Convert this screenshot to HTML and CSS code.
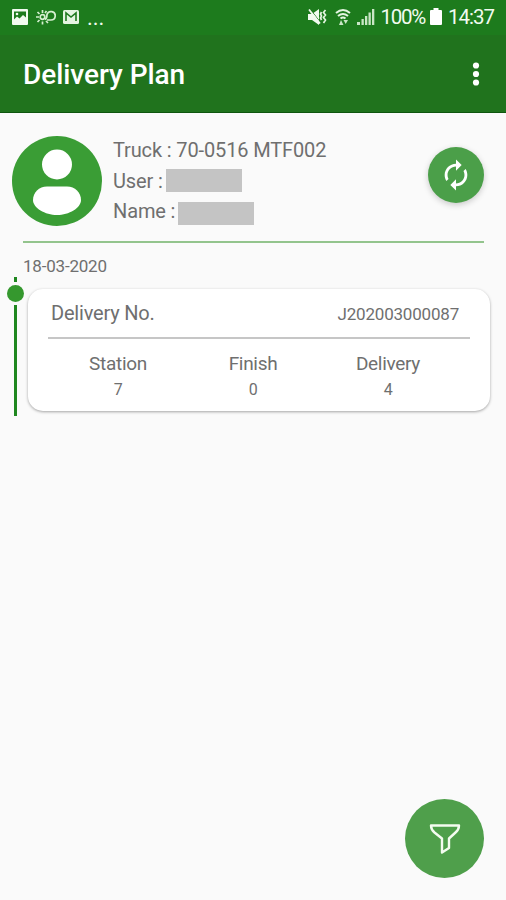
FILE: index.html
```html
<!DOCTYPE html>
<html lang="en">
<head>
  <meta charset="UTF-8">
  <meta name="viewport" content="width=device-width, initial-scale=1.0">
  <title>Delivery Plan</title>
  <link rel="stylesheet" href="styles.css">
</head>
<body>
  <div class="status-bar">
    <div class="status-left">
      <svg width="18" height="18" viewBox="0 0 18 18">
        <path fill="#f2fbf0" fill-rule="evenodd" d="M2 1h14q1 0 1 1v14q0 1-1 1H2q-1 0-1-1V2q0-1 1-1zM3 3.5v8l3-3 2.500 2L12 7l3 2.500V3.500z"/>
        <circle cx="6" cy="6" r="1.300" fill="#f2fbf0"/>
      </svg>
      <svg class="weather" width="20" height="18" viewBox="0 0 20 18" fill="none" stroke="#d5efd0" stroke-width="1.700">
        <circle cx="6.500" cy="9" r="2.300"/>
        <path d="M6.500 2v3M6.500 13.500v3M0 9h3M1.500 4l2 2M1.500 14l2-2M10 13l2 2M9 5l1.500-2"/>
        <path d="M9 11.500c2-1 2-3 2-5a4.200 4.200 0 1 1 4 5.500h-4"/>
      </svg>
      <svg class="mail" width="18" height="16" viewBox="0 0 18 16">
        <rect x="1" y="1" width="16" height="14" rx="1.500" fill="#e4f5e1"/>
        <path d="M4 12V4l5 4 5-4v8" fill="none" stroke="#1d781d" stroke-width="1.600"/>
      </svg>
      <span class="more">...</span>
    </div>
    <div class="status-right">
      <svg width="20" height="18" viewBox="0 0 20 18">
        <path d="M1 6h4l7-5v16l-7-5H1z" fill="#f2fbf0"/>
        <path d="M3.500 1.500l10 13" stroke="#1d7a1d" stroke-width="1"/>
        <path d="M2 1.500l11 14" stroke="#f2fbf0" stroke-width="1.800"/>
        <path d="M14.500 4L13.500 6l1 2-1 2 1 2M18.500 2L16.500 4.500l2 2.500-2 2.500 2 2.500-2 3" fill="none" stroke="#e4f5e1" stroke-width="1.700"/>
      </svg>
      <svg class="wifi" width="16" height="18" viewBox="0 0 16 18">
        <path d="M1 5q7-6 14 0M3 8q5-4 10 0M5.500 10.500q2.500-2 5 0" fill="none" stroke="#e4f5e1" stroke-width="2"/>
        <path d="M6 12l2.500 5H4zM8.500 12H13l-2.300 4z" fill="#c9e6c5"/>
      </svg>
      <svg class="signal" width="18" height="18" viewBox="0 0 18 18" fill="#c9e6c5">
        <path d="M0 14h3v3H0zM4.500 11h2.300v6H4.500zM8 8h2.300v9H8zM11.500 4.500h2.300V17h-2.300zM15 1h2.300v16H15z"/>
      </svg>
      <span class="percent">100%</span>
      <svg class="battery" width="12" height="18" viewBox="0 0 12 18">
        <path d="M3.500 0h5v2H11q1 0 1 1v13q0 1-1 1H1q-1 0-1-1V3q0-1 1-1h2.500z" fill="#fff"/>
      </svg>
      <span class="clock">14:37</span>
    </div>
  </div>

  <header class="app-bar">
    <h1>Delivery Plan</h1>
    <button class="menu-btn" aria-label="Menu">
      <svg width="8" height="24" viewBox="0 0 8 24" fill="#fff">
        <circle cx="4" cy="3.500" r="3.100"/>
        <circle cx="4" cy="12" r="3.100"/>
        <circle cx="4" cy="20.500" r="3.100"/>
      </svg>
    </button>
  </header>

  <main>
    <section class="profile">
      <svg class="avatar" width="90" height="90" viewBox="0 0 90 90">
        <circle cx="45" cy="45" r="45" fill="#3a9d35"/>
        <circle cx="45" cy="28.500" r="15" fill="#fff"/>
        <path d="M35 50.500h20c8 0 14 6 14 13.500C69 72 57 79 45 79S21 72 21 64c0-7.500 6-13.500 14-13.500z" fill="#fff"/>
      </svg>
      <div class="info">
        <div class="info-row">Truck : 70-0516 MTF002</div>
        <div class="info-row">User :<span class="masked user"></span></div>
        <div class="info-row">Name :<span class="masked name"></span></div>
      </div>
      <button class="sync-btn" aria-label="Refresh">
        <svg width="34" height="34" viewBox="0 0 24 24" fill="#fff">
          <path d="M12 6v3l4-4-4-4v3c-4.420 0-8 3.580-8 8 0 1.570.460 3.030 1.240 4.260L6.700 14.800A5.870 5.870 0 0 1 6 12c0-3.310 2.690-6 6-6zm6.760 1.740L17.300 9.200c.440.840.700 1.790.700 2.800 0 3.310-2.690 6-6 6v-3l-4 4 4 4v-3c4.420 0 8-3.580 8-8 0-1.570-.460-3.030-1.240-4.260z"/>
        </svg>
      </button>
    </section>

    <div class="date">18-03-2020</div>

    <section class="entry">
      <div class="timeline">
        <span class="line-top"></span>
        <span class="dot"></span>
        <span class="line"></span>
      </div>
      <div class="card">
        <div class="card-head">
          <span>Delivery No.</span>
          <span class="number">J202003000087</span>
        </div>
        <div class="stats">
          <div class="stat">Station<span class="value">7</span></div>
          <div class="stat">Finish<span class="value">0</span></div>
          <div class="stat">Delivery<span class="value">4</span></div>
        </div>
      </div>
    </section>
  </main>

  <button class="filter-btn" aria-label="Filter">
    <svg width="32" height="32" viewBox="0 0 32 32" fill="none" stroke="#f4fbf0" stroke-width="2.400" stroke-linejoin="round">
      <path d="M2 2.500h28q0 4-3.500 7L20 15.500v9.500l-7 4.500v-14L5.500 9.500Q2 6.500 2 2.500z"/>
    </svg>
  </button>
</body>
</html>
```
FILE: styles.css
```css
* {
  box-sizing: border-box;
}
body {
  margin: 0;
  min-height: 900px;
  font-family: Roboto, "Liberation Sans", sans-serif;
  background-color: #fafafa;
  color: #6f6f6f;
}
button {
  border: none;
  padding: 0;
  cursor: pointer;
}
svg {
  display: block;
}
.status-bar {
  display: flex;
  justify-content: space-between;
  height: 35px;
  padding: 0 12px 0 11px;
  background-color: #1d7b1d;
  color: #f2fbf0;
}
.status-left, .status-right {
  display: flex;
  align-items: center;
  height: 34px;
}
.weather {
  margin-left: 7px;
}
.mail {
  margin-left: 6px;
}
.more {
  margin-left: 7px;
  font-size: 22px;
}
.wifi {
  margin-left: 8px;
}
.signal {
  margin-left: 6px;
}
.percent {
  margin-left: 6px;
  font-size: 20.500px;
  letter-spacing: -1.300px;
}
.battery {
  margin-left: 5px;
}
.clock {
  margin-left: 6px;
  font-size: 20.500px;
  letter-spacing: -1px;
}
.app-bar {
  display: flex;
  justify-content: space-between;
  align-items: center;
  height: 78px;
  padding: 0 26px 0 23px;
  background-color: #20731d;
  border-bottom: 1px solid #0f560f;
}
.app-bar h1 {
  margin: 2px 0 0;
  font-size: 28px;
  font-weight: 500;
  letter-spacing: -0.050px;
  color: #fff;
}
.menu-btn {
  background: none;
}
.profile {
  display: flex;
  position: relative;
  height: 130px;
  padding: 23px 22px 0 12px;
}
.profile::after {
  content: "";
  position: absolute;
  left: 23px;
  right: 22px;
  bottom: 0;
  height: 2px;
  background-color: #93c48d;
}
.info {
  flex: 1;
  margin-top: -1px;
  padding-left: 11px;
}
.info-row {
  display: flex;
  align-items: center;
  height: 30.500px;
  font-size: 20px;
  letter-spacing: -0.130px;
}
.masked {
  width: 76px;
  height: 23px;
  margin-left: 3px;
  background-color: #c4c4c4;
}
.masked.name {
  margin-top: 4px;
}
.sync-btn {
  display: flex;
  align-items: center;
  justify-content: center;
  width: 56px;
  height: 56px;
  margin-top: 11px;
  border-radius: 50%;
  background-color: #4b9f49;
  box-shadow: 0 2px 6px rgba(0, 0, 0, 0.2);
}
.date {
  height: 34px;
  padding: 13px 23px 0;
  font-size: 17px;
  line-height: 20px;
  letter-spacing: -0.200px;
}
.entry {
  display: flex;
  padding: 0 16px 0 7px;
}
.timeline {
  display: flex;
  flex-direction: column;
  align-items: center;
  width: 17px;
  margin-right: 4px;
}
.line-top {
  width: 3px;
  height: 5px;
  background-color: #1f871f;
}
.dot {
  width: 17px;
  height: 17px;
  margin: 3px 0;
  border-radius: 50%;
  background-color: #35982e;
}
.line {
  width: 3px;
  height: 111px;
  background-color: #1f871f;
}
.card {
  flex: 1;
  height: 122px;
  margin-top: 12px;
  padding: 0 20px;
  border-radius: 15px;
  background-color: #fff;
  box-shadow: 0 1px 3px rgba(0, 0, 0, 0.35);
}
.card-head {
  display: flex;
  justify-content: space-between;
  align-items: center;
  height: 50px;
  padding: 0 11px 0 3px;
  border-bottom: 2px solid #c6c6c6;
  font-size: 20px;
  letter-spacing: -0.200px;
}
.number {
  margin-top: 2px;
  font-size: 17px;
}
.stats {
  display: flex;
  justify-content: space-between;
  padding: 13px 16px 0 4px;
}
.stat {
  width: 132px;
  font-size: 19px;
  line-height: 24px;
  letter-spacing: -0.300px;
  text-align: center;
}
.value {
  display: block;
  margin-top: 2px;
  font-size: 16px;
}
.filter-btn {
  position: fixed;
  right: 22px;
  bottom: 22px;
  display: flex;
  align-items: center;
  justify-content: center;
  width: 79px;
  height: 79px;
  border-radius: 50%;
  background-color: #4f9f4b;
}
```
